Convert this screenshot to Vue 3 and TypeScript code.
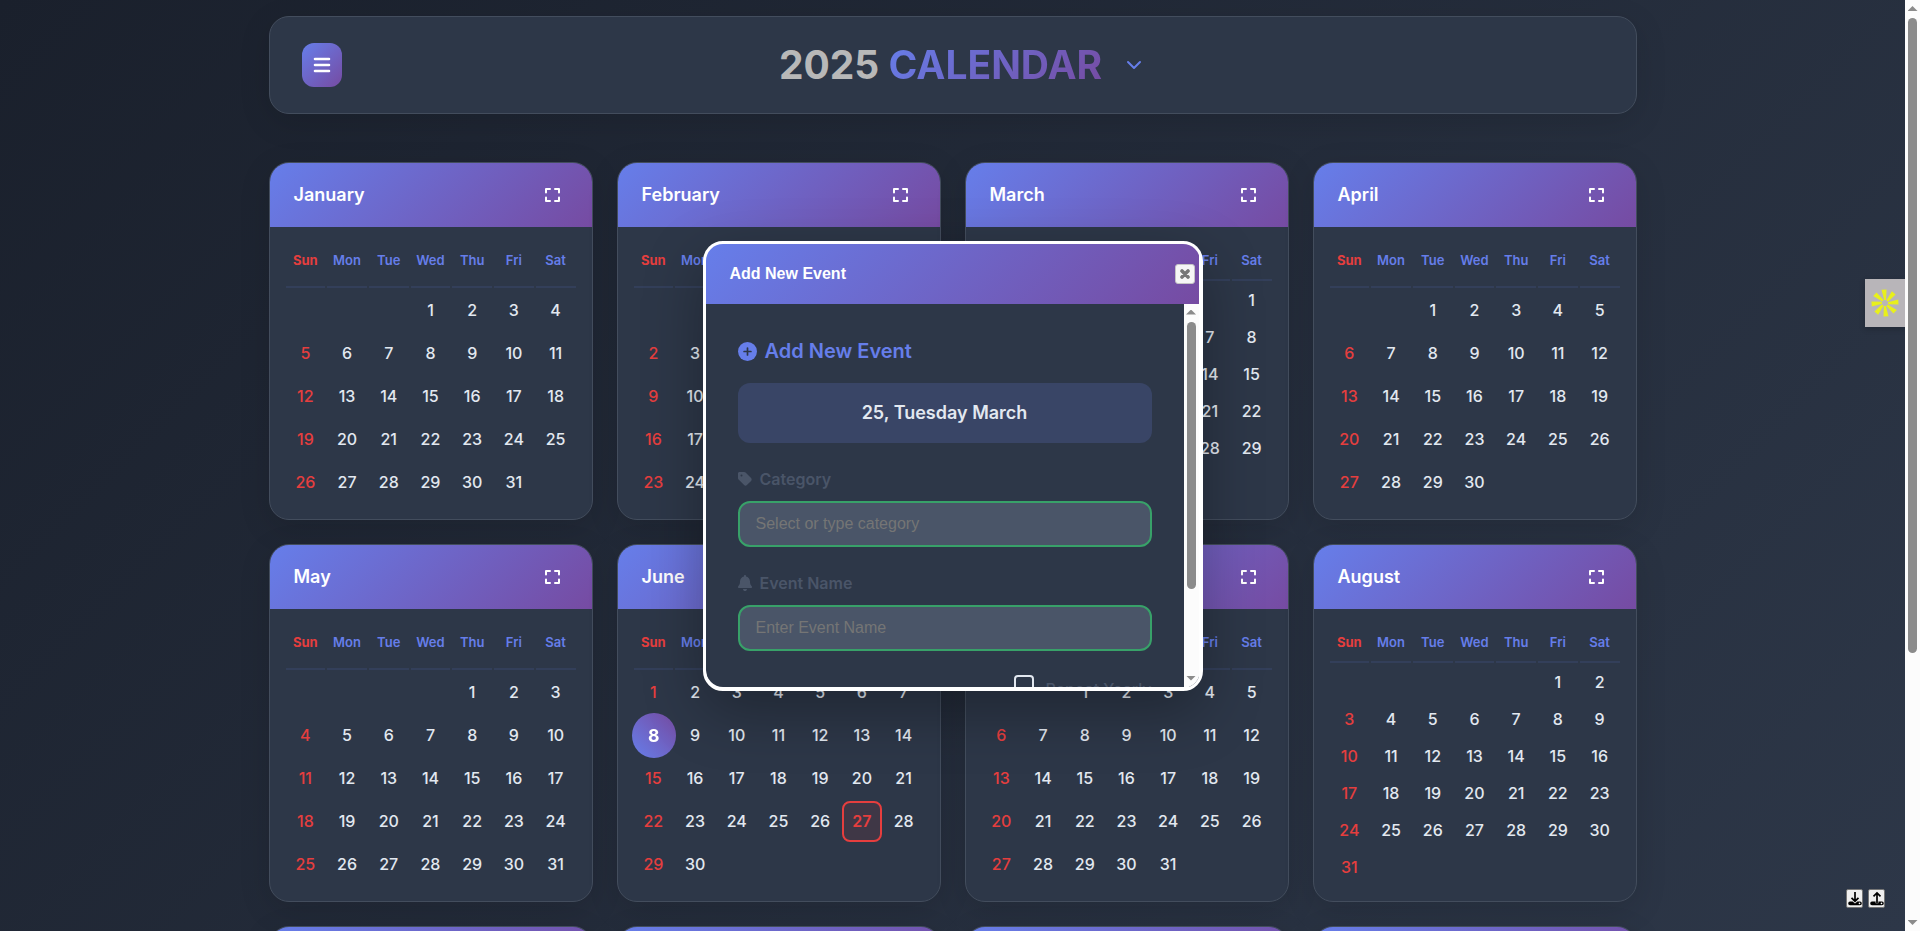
<script setup lang="ts">
import { ref } from 'vue'

interface Month {
  name: string
  weeks: (number | null)[][]
}

const year = 2025
const weekdays = ['Sun', 'Mon', 'Tue', 'Wed', 'Thu', 'Fri', 'Sat']
const names = [
  'January', 'February', 'March', 'April', 'May', 'June',
  'July', 'August', 'September', 'October', 'November', 'December',
]

function buildWeeks(month: number): (number | null)[][] {
  const first = new Date(year, month, 1).getDay()
  const total = new Date(year, month + 1, 0).getDate()
  const count = Math.ceil((first + total) / 7)
  return Array.from({ length: count }, (_, week) =>
    Array.from({ length: 7 }, (_, day) => {
      const date = week * 7 + day - first + 1
      return date >= 1 && date <= total ? date : null
    }),
  )
}

const months: Month[] = names.map((name, index) => ({ name, weeks: buildWeeks(index) }))

function dayClass(month: string, day: number | null) {
  return {
    day: true,
    'day--today': month === 'June' && day === 8,
    'day--event': month === 'June' && day === 27,
  }
}

const category = ref('')
const eventName = ref('')
const repeatYearly = ref(false)
</script>

<template>
  <div class="shell">
    <main class="page">
      <div class="container">
        <header class="topbar">
          <button class="menu-button" type="button" aria-label="Menu">
            <svg viewBox="0 0 18 18" width="18" height="18">
              <path d="M2 3h14M2 9h14M2 15h14" stroke="#fff" stroke-width="2.6" stroke-linecap="round" />
            </svg>
          </button>
          <div class="title-group">
            <h1 class="title"><span class="title-year">2025</span> <span class="title-word">CALENDAR</span></h1>
            <button class="chevron-button" type="button" aria-label="Choose year">
              <svg viewBox="0 0 16 16" width="16" height="16">
                <path d="M2 5l6 6 6-6" fill="none" stroke="#667eea" stroke-width="2" stroke-linecap="round" stroke-linejoin="round" />
              </svg>
            </button>
          </div>
        </header>

        <div class="months">
          <section v-for="month in months" :key="month.name" class="month">
            <div class="month-head">
              <h2 class="month-name">{{ month.name }}</h2>
              <button class="expand-button" type="button" :aria-label="`Expand ${month.name}`">
                <svg viewBox="0 0 15 14" width="15" height="14">
                  <path d="M1 4.600V1h4M10 1h4v3.600M14 9.400V13h-4M5 13H1V9.400" fill="none" stroke="#fff" stroke-width="2" stroke-linecap="round" stroke-linejoin="round" />
                </svg>
              </button>
            </div>
            <table class="days" :class="{ 'days--six': month.weeks.length === 6 }">
              <thead>
                <tr>
                  <th v-for="weekday in weekdays" :key="weekday" scope="col">{{ weekday }}</th>
                </tr>
              </thead>
              <tbody>
                <tr v-for="(week, w) in month.weeks" :key="w">
                  <td v-for="(day, d) in week" :key="d">
                    <div :class="dayClass(month.name, day)">{{ day ?? '' }}</div>
                  </td>
                </tr>
              </tbody>
            </table>
          </section>
        </div>
      </div>

      <button class="widget" type="button" aria-label="Open widget">
        <svg viewBox="-14 -14 28 28" width="28" height="28" fill="#e8f01c">
          <g transform="rotate(-3)">
            <path v-for="n in 8" :key="n" d="M-2.800-13.400h5L1.300-3h-2z" :transform="`rotate(${n * 45})`" />
          </g>
        </svg>
      </button>

      <div class="backup">
        <button class="backup-button" type="button" aria-label="Download">
          <svg viewBox="0 0 14 16" width="14" height="16">
            <path d="M7 1v9M3.500 6.800L7 10.200l3.500-3.400" fill="none" stroke="#000" stroke-width="1.7" />
            <path d="M2 10.600h2.600L7 12.600l2.400-2h2.600a1.600 1.600 0 0 1 0 3.600H2a1.600 1.600 0 0 1 0-3.600z" />
            <circle cx="11.500" cy="12.400" r="0.800" fill="#fff" />
          </svg>
        </button>
        <button class="backup-button" type="button" aria-label="Upload">
          <svg viewBox="0 0 14 16" width="14" height="16">
            <path d="M7 12V2M3.500 5.400L7 2l3.500 3.400" fill="none" stroke="#000" stroke-width="1.7" />
            <path d="M2 10.600h3.600v1.600h2.800v-1.600h3.600a1.600 1.600 0 0 1 0 3.600H2a1.600 1.600 0 0 1 0-3.600z" />
            <circle cx="11.500" cy="12.400" r="0.800" fill="#fff" />
          </svg>
        </button>
      </div>

      <div class="overlay">
        <div class="dialog" role="dialog" aria-labelledby="dialog-title">
          <div class="dialog-head">
            <span id="dialog-title" class="dialog-title">Add New Event</span>
            <button class="close-button" type="button" aria-label="Close">
              <svg viewBox="0 0 10 10" width="10" height="10">
                <path d="M2 2l6 6M8 2l-6 6" stroke="#777" stroke-width="3.6" stroke-linecap="round" />
              </svg>
            </button>
          </div>
          <div class="dialog-body">
            <form class="form" @submit.prevent>
              <h3 class="form-title">
                <svg viewBox="0 0 20 20" width="19" height="19">
                  <circle cx="10" cy="10" r="10" fill="#667eea" />
                  <path d="M10 6.400v7.200M6.400 10h7.200" stroke="#2d3748" stroke-width="1.8" stroke-linecap="round" />
                </svg>
                Add New Event
              </h3>
              <p class="form-date">25, Tuesday March</p>
              <label class="label" for="category">
                <svg viewBox="0 0 448 512" width="14" height="16" fill="#4a5568">
                  <path d="M0 80V229.500c0 17 6.700 33.300 18.700 45.300l176 176c25 25 65.500 25 90.500 0L418.700 317.300c25-25 25-65.500 0-90.500l-176-176c-12-12-28.300-18.700-45.300-18.700H48C21.500 32 0 53.500 0 80zm112 32a32 32 0 1 1 0 64 32 32 0 1 1 0-64z" />
                </svg>
                Category
              </label>
              <input id="category" v-model="category" class="field" type="text" placeholder="Select or type category" />
              <label class="label" for="event-name">
                <svg viewBox="0 0 448 512" width="14" height="16" fill="#4a5568">
                  <path d="M224 0c-17.700 0-32 14.300-32 32v19.200C119 66 64 130.600 64 208v18.800c0 47-17.300 92.400-48.500 127.600l-7.400 8.300c-8.400 9.400-10.400 22.900-5.300 34.400S19.400 416 32 416H416c12.600 0 24-7.400 29.200-18.900s3.100-25-5.300-34.400l-7.400-8.300C401.300 319.200 384 273.900 384 226.800V208c0-77.400-55-142-128-156.800V32c0-17.700-14.300-32-32-32zm45.300 493.300c12-12 18.700-28.300 18.700-45.300H160c0 17 6.700 33.300 18.700 45.300s28.300 18.700 45.300 18.700 33.300-6.700 45.300-18.700z" />
                </svg>
                Event Name
              </label>
              <input id="event-name" v-model="eventName" class="field" type="text" placeholder="Enter Event Name" />
              <div class="repeat">
                <input id="repeat" v-model="repeatYearly" class="checkbox" type="checkbox" />
                <label for="repeat" class="repeat-label">Repeat Yearly</label>
              </div>
            </form>
            <div class="scrollbar" aria-hidden="true">
              <span class="arrow arrow--up"></span>
              <span class="track"><span class="thumb thumb--dialog"></span></span>
              <span class="arrow arrow--down"></span>
            </div>
          </div>
        </div>
      </div>
    </main>
    <div class="scrollbar" aria-hidden="true">
      <span class="arrow arrow--up"></span>
      <span class="track"><span class="thumb thumb--page"></span></span>
      <span class="arrow arrow--down"></span>
    </div>
  </div>
</template>

<style>
body {
  margin: 0;
  overflow: hidden;
}
</style>

<style scoped>
.shell,
.shell * {
  box-sizing: border-box;
}

.shell {
  display: flex;
  height: 100vh;
  font-family: Inter, "Liberation Sans", sans-serif;
  color: #e2e8f0;
  background: #fcfcfc;
}

button {
  display: flex;
  align-items: center;
  justify-content: center;
  padding: 0;
  border: 0;
  background: none;
}

.page {
  position: relative;
  flex: 1;
  min-width: 0;
  overflow: hidden;
  background: linear-gradient(135deg, #1a202c 0%, #2d3748 100%);
}

.container {
  max-width: 1400px;
  margin: 0 auto;
  padding: 16px;
}

.topbar {
  display: flex;
  align-items: center;
  margin-bottom: 48px;
  padding: 24px 32px;
  border: 1px solid #434d5d;
  border-radius: 20px;
  background: #2d3748;
  box-shadow: 0 8px 32px rgba(0, 0, 0, 0.12);
}

.menu-button {
  width: 40px;
  height: 44px;
  border-radius: 12px;
  background: linear-gradient(135deg, #667eea 0%, #764ba2 100%);
}

.title-group {
  display: flex;
  flex: 1;
  align-items: center;
  justify-content: center;
}

.title {
  margin: 0;
  font-size: 39px;
  font-weight: 700;
  line-height: 48px;
}

.title-year {
  color: #b8b8b8;
}

.title-word {
  color: transparent;
  background: linear-gradient(135deg, #667eea 0%, #764ba2 100%);
  background-clip: text;
}

.chevron-button {
  width: 64px;
  height: 40px;
}

.months {
  display: grid;
  grid-template-columns: repeat(4, 1fr);
  gap: 24px;
}

.month {
  overflow: hidden;
  border: 1px solid #434d5d;
  border-radius: 20px;
  background: #2d3748;
  box-shadow: 0 8px 32px rgba(0, 0, 0, 0.12);
}

.month-head {
  display: flex;
  align-items: center;
  justify-content: space-between;
  height: 64px;
  padding: 0 24px;
  background: linear-gradient(135deg, #667eea 0%, #764ba2 100%);
}

.month-name {
  margin: 0;
  font-size: 18px;
  font-weight: 600;
  line-height: 24px;
  color: #fff;
}

.expand-button {
  width: 31px;
  height: 30px;
}

.days {
  width: calc(100% - 28px);
  margin: 14px;
  border-spacing: 2px;
  table-layout: fixed;
}

.days th,
.days td {
  padding: 0;
  text-align: center;
}

.days th {
  height: 45px;
  padding-top: 9px;
  border-bottom: 2px solid #333f5a;
  font-size: 13px;
  font-weight: 600;
  line-height: 16px;
  vertical-align: top;
  color: #667eea;
}

.days th:first-child,
.days td:first-child {
  color: #e53e3e;
}

.days th:first-child {
  font-weight: 700;
}

.days td {
  height: 41px;
  font-size: 16px;
  font-weight: 500;
}

.days--six th {
  height: 38px;
}

.days--six td {
  height: 35px;
}

.day {
  display: flex;
  align-items: center;
  justify-content: center;
  height: 100%;
  padding-bottom: 1px;
}

.day--today {
  border-radius: 50%;
  font-weight: 700;
  color: #fff;
  background: linear-gradient(45deg, #667eea 0%, #764ba2 100%);
  transform: scale(1.1);
}

.day--event {
  border: 2px solid #e53e3e;
  border-radius: 8px;
  font-weight: 600;
  color: #e53e3e;
  background: rgba(229, 62, 62, 0.1);
}

.widget {
  position: absolute;
  top: 279px;
  right: 0;
  width: 40px;
  height: 48px;
  background: #b8b5b9;
  box-shadow: 0 2px 6px rgba(0, 0, 0, 0.2);
}

.backup {
  position: absolute;
  right: 20px;
  bottom: 23px;
  display: flex;
  gap: 5px;
}

.backup-button {
  width: 17px;
  height: 19px;
  border: 1px solid #767676;
  border-radius: 2px;
  background: #efefef;
}

.overlay {
  position: absolute;
  inset: 0;
  display: flex;
  align-items: center;
  justify-content: center;
}

.dialog {
  display: flex;
  flex-direction: column;
  width: 500px;
  height: 450px;
  padding: 0 1px 1px 0;
  overflow: hidden;
  border: 3px solid #fff;
  border-radius: 20px;
  background: #fff;
  box-shadow: 0 20px 60px rgba(0, 0, 0, 0.3);
}

.dialog-head {
  display: flex;
  align-items: center;
  justify-content: space-between;
  height: 60px;
  padding: 0 4px 0 24px;
  background: linear-gradient(135deg, #667eea 0%, #764ba2 100%);
}

.dialog-title {
  font-family: "Liberation Sans", Arial, sans-serif;
  font-size: 16px;
  font-weight: 700;
  color: #fff;
}

.close-button {
  width: 20px;
  height: 20px;
  border: 1px solid #c5c5c5;
  border-radius: 3px;
  background: #f6f6f6;
}

.dialog-body {
  display: flex;
  flex: 1;
  min-height: 0;
  overflow: hidden;
  border-bottom-left-radius: 17px;
  background: #2d3748;
}

.form {
  flex: 1;
  padding: 32px;
}

.form-title {
  display: flex;
  align-items: center;
  gap: 8px;
  margin: 0 0 16px;
  font-size: 20px;
  font-weight: 600;
  line-height: 31px;
  color: #667eea;
}

.form-date {
  margin: 0 0 24px;
  border-radius: 12px;
  font-size: 18px;
  font-weight: 600;
  line-height: 60px;
  text-align: center;
  background: #394566;
}

.label {
  display: flex;
  align-items: center;
  gap: 8px;
  margin-bottom: 10px;
  font-size: 16px;
  font-weight: 600;
  line-height: 24px;
  color: #4a5568;
}

.field {
  display: block;
  width: 100%;
  height: 46px;
  margin: 0 0 24px;
  padding: 0 16px;
  border: 2px solid #38a169;
  border-radius: 12px;
  font-family: "Liberation Sans", Arial, sans-serif;
  font-size: 16px;
  color: #e2e8f0;
  background: #4a5568;
}

.field::placeholder {
  color: #757575;
}

.repeat {
  display: flex;
  align-items: flex-start;
  justify-content: flex-end;
  gap: 12px;
}

.checkbox {
  appearance: none;
  width: 20px;
  height: 20px;
  margin: 0;
  border: 2px solid #e2e8f0;
  border-radius: 4px;
}

.repeat-label {
  font-size: 16px;
  font-weight: 500;
  line-height: 28px;
  color: #4a5568;
}

.scrollbar {
  display: flex;
  flex-direction: column;
  align-items: center;
  width: 15px;
  padding: 6px 3px;
  background: #fcfcfc;
}

.arrow {
  width: 10px;
  height: 5px;
  background: #8b8b8b;
}

.arrow--up {
  clip-path: polygon(50% 0, 100% 100%, 0 100%);
}

.arrow--down {
  clip-path: polygon(0 0, 100% 0, 50% 100%);
}

.track {
  flex: 1;
  width: 9px;
  margin: 7px 0;
}

.thumb {
  display: block;
  border-radius: 5px;
  background: #8b8b8b;
}

.thumb--page {
  height: 71%;
}

.thumb--dialog {
  height: 77%;
}
</style>
